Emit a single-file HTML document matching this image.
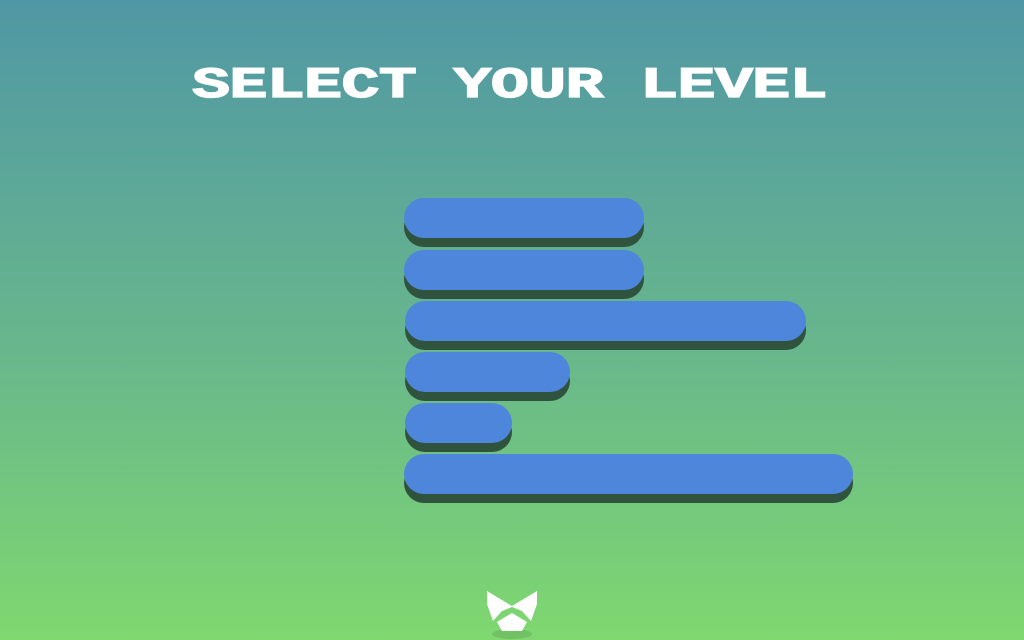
<!DOCTYPE html>
<html><head><style>
html,body{margin:0;padding:0}
body{width:1024px;height:640px;overflow:hidden;position:relative;background:linear-gradient(#5097a5,#68b78c 55%,#7fd86f);}
.t{position:absolute;left:192px;top:62px;height:56px;font-family:"Liberation Mono",monospace;font-weight:bold;font-size:50px;color:#fff;white-space:nowrap;line-height:56px;transform-origin:0 0;transform:scale(1.27,0.875);letter-spacing:-0.6px;-webkit-text-stroke:1.5px #fff}
.b{position:absolute;height:40px;border-radius:20px;background:#4d86da;box-shadow:0 9px 0 #2f533d;left:404px}
</style></head><body>
<div class="t">SELECT YOUR LEVEL</div>
<div class="b" style="top:198px;width:240px"></div>
<div class="b" style="top:250px;width:240px"></div>
<div class="b" style="top:301px;width:401px;left:405px"></div>
<div class="b" style="top:352px;width:165px;left:405px"></div>
<div class="b" style="top:403px;width:107px;left:405px"></div>
<div class="b" style="top:454px;width:449px"></div>
<svg style="position:absolute;left:0;top:0" width="1024" height="640">
<ellipse cx="512" cy="634" rx="20" ry="5" fill="#68b25e" opacity="0.6"/>
<path d="M487 591 L512 606 L537 591 L537 604 L531 621 L522 611 L512 607 L502 611 L493 621 L487 604 Z" fill="#fff"/>
<path d="M497 622 L512 613 L527 622 L522 631 L502 631 Z" fill="#fff"/>
</svg>
</body></html>
